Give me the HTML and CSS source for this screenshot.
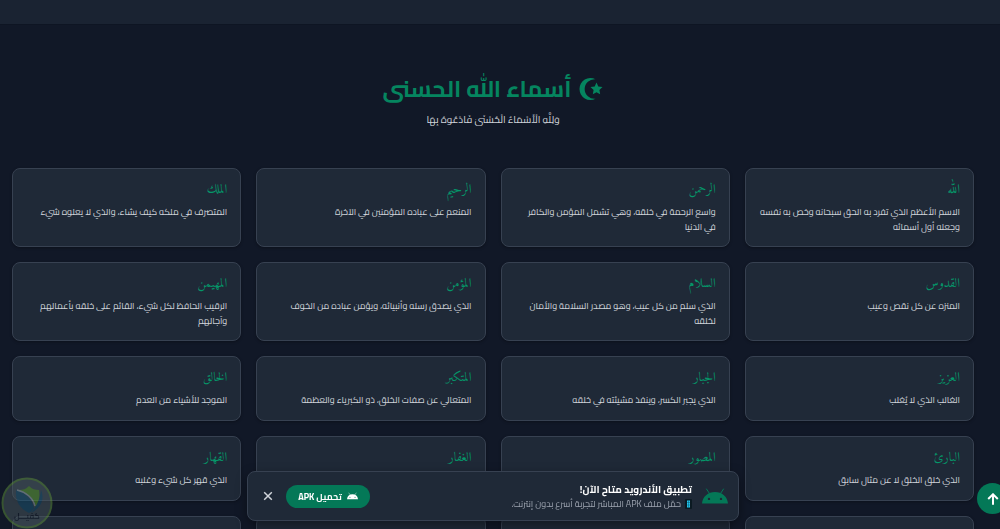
FILE: index.html
```html
<!DOCTYPE html>
<html lang="ar" dir="rtl">
<head>
    <meta charset="UTF-8">
    <title>أسماء الله الحسنى</title>
    <meta name="viewport" content="width=device-width, initial-scale=1.0">
    <link rel="stylesheet" href="styles.css">
</head>
<body>
    <div class="top-strip"></div>

    <main class="names-section">
        <header class="section-header">
            <h1>
                <svg class="moon-icon" viewBox="0 0 24 24" aria-hidden="true">
                    <path d="M16.500 2.200A11 11 0 1 0 16.500 21.800A9.850 9.850 0 1 1 16.500 2.200Z"/>
                    <path d="M17.500 5.600l1.800 4 4.200.5-3.100 2.900.8 4.300-3.700-2.100-3.700 2.100.8-4.300-3.100-2.900 4.200-.5z"/>
                </svg>
                <span>أسماء الله الحسنى</span>
            </h1>
            <p>وَلِلَّهِ الْأَسْمَاءُ الْحُسْنَىٰ فَادْعُوهُ بِهَا</p>
        </header>

        <div class="names-grid">
            <article class="name-card">
                <h2>الله</h2>
                <p>الاسم الأعظم الذي تفرد به الحق سبحانه وخص به نفسه وجعله أول أسمائه</p>
            </article>
            <article class="name-card">
                <h2>الرحمن</h2>
                <p>واسع الرحمة في خلقه، وهي تشمل المؤمن والكافر في الدنيا</p>
            </article>
            <article class="name-card">
                <h2>الرحيم</h2>
                <p>المنعم على عباده المؤمنين في الآخرة</p>
            </article>
            <article class="name-card">
                <h2>الملك</h2>
                <p>المتصرف في ملكه كيف يشاء، والذي لا يعلوه شيء</p>
            </article>
            <article class="name-card">
                <h2>القدوس</h2>
                <p>المنزه عن كل نقص وعيب</p>
            </article>
            <article class="name-card">
                <h2>السلام</h2>
                <p>الذي سلم من كل عيب، وهو مصدر السلامة والأمان لخلقه</p>
            </article>
            <article class="name-card">
                <h2>المؤمن</h2>
                <p>الذي يصدق رسله وأنبيائه، ويؤمن عباده من الخوف</p>
            </article>
            <article class="name-card">
                <h2>المهيمن</h2>
                <p>الرقيب الحافظ لكل شيء، القائم على خلقه بأعمالهم وآجالهم</p>
            </article>
            <article class="name-card">
                <h2>العزيز</h2>
                <p>الغالب الذي لا يُغلب</p>
            </article>
            <article class="name-card">
                <h2>الجبار</h2>
                <p>الذي يجبر الكسر، وينفذ مشيئته في خلقه</p>
            </article>
            <article class="name-card">
                <h2>المتكبر</h2>
                <p>المتعالي عن صفات الخلق، ذو الكبرياء والعظمة</p>
            </article>
            <article class="name-card">
                <h2>الخالق</h2>
                <p>الموجد للأشياء من العدم</p>
            </article>
            <article class="name-card">
                <h2>البارئ</h2>
                <p>الذي خلق الخلق لا عن مثال سابق</p>
            </article>
            <article class="name-card">
                <h2>المصور</h2>
            </article>
            <article class="name-card">
                <h2>الغفار</h2>
            </article>
            <article class="name-card">
                <h2>القهار</h2>
                <p>الذي قهر كل شيء وغلبه</p>
            </article>
            <article class="name-card"></article>
            <article class="name-card"></article>
            <article class="name-card"></article>
            <article class="name-card"></article>
        </div>
    </main>

    <!-- Android app banner -->
    <aside class="app-banner">
        <svg class="android-icon" viewBox="0 0 26 16" aria-hidden="true">
            <path class="antenna" d="M4.500 1l3 4.500M21.500 1l-3 4.500"/>
            <path class="head" fill-rule="evenodd" d="M0 15.500C.6 8.500 6 4 13 4s12.400 4.500 13 11.500zM7 9.700a1.200 1.200 0 1 0 0 2.400 1.200 1.200 0 0 0 0-2.400zM19 9.700a1.200 1.200 0 1 0 0 2.400 1.200 1.200 0 0 0 0-2.400z"/>
        </svg>
        <div class="banner-text">
            <strong>تطبيق الأندرويد متاح الآن!</strong>
            <span class="banner-note">
                <svg class="phone-icon" viewBox="0 0 7 10" aria-hidden="true">
                    <rect width="7" height="10" rx="1" fill="#0b1a22"/>
                    <path d="M2 1.500h3v7H2z" fill="#22c7ee"/>
                    <path d="M3.500 1.500v7M2 3.500h3M2 6h3" stroke="#0b5a78" stroke-width=".5"/>
                </svg>
                <span>حمّل ملف APK المباشر لتجربة أسرع بدون إنترنت.</span>
            </span>
        </div>
        <button class="download-btn" type="button">
            <svg viewBox="0 0 26 16" aria-hidden="true">
                <path class="antenna" d="M4.500 1l3 4.500M21.500 1l-3 4.500"/>
                <path class="head" fill-rule="evenodd" d="M0 15.500C.6 8.500 6 4 13 4s12.400 4.500 13 11.500zM7 9.700a1.200 1.200 0 1 0 0 2.400 1.200 1.200 0 0 0 0-2.400zM19 9.700a1.200 1.200 0 1 0 0 2.400 1.200 1.200 0 0 0 0-2.400z"/>
            </svg>
            <span>تحميل APK</span>
        </button>
        <button class="close-btn" type="button" aria-label="إغلاق">
            <svg viewBox="0 0 10 10" aria-hidden="true"><path d="M1.200 1.200l7.600 7.600M8.800 1.200l-7.600 7.600"/></svg>
        </button>
    </aside>

    <button class="scroll-top" type="button" aria-label="إلى الأعلى">
        <svg viewBox="0 0 12 12" aria-hidden="true"><path d="M6 11.700V1.500M1.200 6L6 1.300 10.800 6"/></svg>
    </button>

    <!-- Watermark badge -->
    <div class="watermark">
        <svg viewBox="0 0 52 52" aria-hidden="true">
            <circle cx="26" cy="26" r="24.500" fill="#4b585f" stroke="#5f8f3c" stroke-width="2"/>
            <path d="M18 13c4 0 7-1 10-4 3 3 6 4 10 4 1 7 0 12-3 17-3-8-8-13-17-17z" fill="#5ea22e"/>
            <path d="M15 13c10 3 16 9 18 18-1 2-3 4-5 5-9-4-14-12-13-23z" fill="#1e5a78"/>
            <path d="M40 13c4 9 0 18-10 23 5-6 9-13 10-23z" fill="#1e5a78"/>
            <path d="M16 13c9 2 16 8 18 16" fill="none" stroke="#a3b4b8" stroke-width="1.500"/>
        </svg>
        <span>كفيـــل</span>
    </div>
</body>
</html>
```

FILE: styles.css
```css
:root {
    --bg: #111827;
    --strip: #1a2332;
    --card: #1f2937;
    --border: #374151;
    --green: #047857;
    --green-heading: #05855f;
    --green-text: #059669;
    --text: #d1d5db;
    --font-ui: "Cairo", "DejaVu Sans", sans-serif;
    --font-name: "Amiri", "DejaVu Sans", serif;
}

* {
    box-sizing: border-box;
}

body {
    margin: 0;
    background-color: var(--bg);
    color: var(--text);
    font-family: var(--font-ui);
    height: 100vh;
    overflow: hidden;
}

h1,
h2,
p {
    margin: 0;
}

.top-strip {
    height: 25px;
    background-color: var(--strip);
    border-bottom: 1px solid #0e1523;
}

/* Names section */
.names-section {
    padding: 45px 26px 0 12px;
}

.section-header {
    text-align: center;
    margin-bottom: 38px;
}

.section-header h1 {
    display: flex;
    justify-content: center;
    align-items: center;
    gap: 8px;
    margin-bottom: 2px;
    color: var(--green-heading);
    font-size: 23px;
    font-weight: bold;
    line-height: 38px;
}

.moon-icon {
    width: 24px;
    height: 24px;
    fill: currentColor;
}

.section-header p {
    font-size: 10px;
    line-height: 20px;
}

.names-grid {
    display: grid;
    grid-template-columns: repeat(4, 1fr);
    gap: 15px;
}

.name-card {
    min-height: 65px;
    padding: 12px 13px;
    background-color: var(--card);
    border: 1px solid var(--border);
    border-radius: 8px;
    box-shadow: 0 1px 3px rgba(0, 0, 0, 0.3);
}

.name-card h2 {
    color: var(--green-text);
    font-family: var(--font-name);
    font-size: 13px;
    font-weight: normal;
    line-height: 18px;
    margin-bottom: 5px;
}

.name-card p {
    font-size: 9px;
    line-height: 15px;
}

/* App banner */
.app-banner {
    position: fixed;
    bottom: 8px;
    left: calc(50% - 7px);
    transform: translateX(-50%);
    width: 49.2%;
    height: 50px;
    display: flex;
    align-items: center;
    gap: 10px;
    padding: 0 10px 0 12px;
    background-color: var(--card);
    border: 1px solid var(--border);
    border-radius: 8px;
    box-shadow: 0 4px 12px rgba(0, 0, 0, 0.4);
}

.android-icon {
    width: 26px;
    height: 16px;
    color: var(--green);
}

.antenna {
    fill: none;
    stroke: currentColor;
    stroke-width: 1;
    stroke-linecap: round;
}

.head {
    fill: currentColor;
}

.banner-text {
    flex: 1;
    display: flex;
    flex-direction: column;
    white-space: nowrap;
}

.banner-text strong {
    color: #fff;
    font-size: 10px;
    line-height: 15px;
}

.banner-note {
    display: flex;
    align-items: center;
    gap: 4px;
    color: #9ca3af;
    font-size: 9px;
    line-height: 14px;
}

.phone-icon {
    width: 7px;
    height: 10px;
}

button {
    padding: 0;
    border: none;
    font-family: inherit;
    cursor: pointer;
}

.download-btn {
    display: flex;
    justify-content: center;
    align-items: center;
    gap: 5px;
    width: 84px;
    height: 23px;
    border-radius: 12px;
    background-color: var(--green);
    color: #fff;
    font-size: 9px;
    font-weight: bold;
}

.download-btn svg {
    width: 11px;
    height: 8px;
}

.close-btn {
    width: 16px;
    height: 24px;
    background: none;
    color: var(--text);
}

.close-btn svg {
    display: block;
    width: 10px;
    height: 10px;
    margin: 0 auto;
}

.close-btn path,
.scroll-top path {
    fill: none;
    stroke: currentColor;
    stroke-width: 2;
}

.close-btn path {
    stroke-width: 1.5;
}

.scroll-top {
    position: fixed;
    right: -8px;
    bottom: 15px;
    width: 31px;
    height: 31px;
    border-radius: 50%;
    background-color: var(--green);
    color: #fff;
}

.scroll-top svg {
    display: block;
    width: 12px;
    height: 12px;
    margin: 0 auto;
}

.watermark {
    position: fixed;
    left: 1px;
    bottom: 0;
    width: 52px;
    height: 52px;
    opacity: 0.5;
}

.watermark svg {
    display: block;
}

.watermark span {
    position: absolute;
    bottom: 8px;
    left: 0;
    width: 100%;
    color: #16202c;
    font-size: 8px;
    font-weight: bold;
    line-height: 8px;
    text-align: center;
}
```
